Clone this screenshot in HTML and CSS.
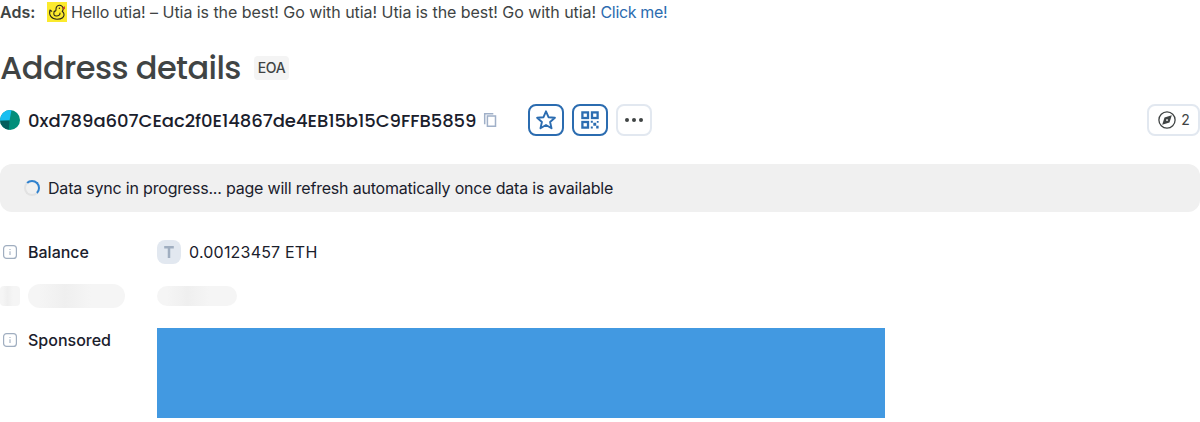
FILE: index.html
```
<!DOCTYPE html>
<html lang="en">
<head>
<meta charset="utf-8">
<title>Address details</title>
<link rel="stylesheet" href="styles.css">
</head>
<body>
<div class="ad">
  <b class="ad-label">Ads:</b>
  <svg class="duck" viewBox="0 0 20 20"><rect width="20" height="20" fill="#fbea2d"/><g fill="none" stroke="#28251a" stroke-width="1.1" stroke-linecap="round" stroke-linejoin="round"><path d="M3 8C1.500 13.500 4.800 17.300 10 17.300S17.500 15 17 12c-.2-1.200-.9-2-1.800-2.700A3.600 3.600 0 1 0 9 7c.2 1.700-.6 2.400-1.900 2.300M3 8c.8 0 .8.900 1.700 1.300"/><path d="M7.500 9.300C5.800 12 7.200 14 9.500 14s3.700-1.200 3.500-3"/></g><circle cx="12.400" cy="6.200" r=".7" fill="#28251a"/><path d="m15.600 5.300 2.300-1v2.700l-2 .5Z" fill="#c33b25"/></svg>
  <span class="ad-text">Hello utia! – Utia is the best! Go with utia! Utia is the best! Go with utia! <a class="link">Click me!</a></span>
</div>
<div class="heading"><h1 class="title">Address details</h1><span class="tag">EOA</span></div>
<div class="address-row">
  <svg class="identicon" viewBox="0 0 20 20"><defs><clipPath id="disc"><circle cx="10" cy="10" r="10"/></clipPath></defs><g clip-path="url(#disc)"><rect width="20" height="20" fill="#018e7a"/><path d="M0 0h11.500L9.500 10.500 0 10.800Z" fill="#18bff2"/><path d="M0 10.800 9.500 10.500 8.800 20H0Z" fill="#035e5c"/></g></svg>
  <span class="hash">0xd789a607CEac2f0E14867de4EB15b15C9FFB5859</span>
  <svg class="copy" viewBox="0 0 20 20" fill="none" stroke="#a0b0c8" stroke-width="1.500"><path d="M4.700 14.300V3.700h8.600"/><path d="M7.400 6.100h8.100v10.100H7.400Z"/></svg>
  <div class="actions">
    <span class="btn btn-blue"><svg class="icon20" viewBox="0 0 20 20"><path d="m10 1.300 2.500 5.900 6.400.6-4.800 4.200 1.400 6.300-5.500-3.300-5.500 3.300L5.900 12 1.100 7.800l6.400-.6Z" fill="none" stroke="#2b6cb0" stroke-width="1.900" stroke-linejoin="round"/></svg></span>
    <span class="btn btn-blue"><svg class="icon20" viewBox="0 0 20 20"><g fill="none" stroke="#2b6cb0" stroke-width="2.300"><rect x="2.400" y="2.400" width="5.600" height="5.600"/><rect x="12" y="2.400" width="5.600" height="5.600"/><rect x="2.400" y="12" width="5.600" height="5.600"/></g><path d="M10.800 10.800h2v2h-2Zm2.500 2h2.900v2.900h-2.900Zm3.500-1.800h1.800v1.800h-1.800Zm-6 5.600h2v2h-2Zm5.400-.9h2.400v2.800h-2.400Z" fill="#2b6cb0"/></svg></span>
    <span class="btn"><svg class="icon20" viewBox="0 0 20 20" fill="#404444"><circle cx="3" cy="10" r="2"/><circle cx="10" cy="10" r="2"/><circle cx="17" cy="10" r="2"/></svg></span>
  </div>
  <span class="btn explorers"><svg class="icon20" viewBox="0 0 20 20"><circle cx="10" cy="10" r="8.100" fill="none" stroke="#404444" stroke-width="1.300"/><path fill-rule="evenodd" d="m14.800 5.200-2.300 7.300-7.300 2.300 2.300-7.300Zm-5.900 4.900 1.100 1.100 1.200-1.100-1.200-1.200Z" fill="#404444"/></svg>2</span>
</div>
<div class="alert"><span class="spinner"></span><span class="alert-text">Data sync in progress... page will refresh automatically once data is available</span></div>
<div class="details">
  <svg class="info" viewBox="0 0 20 20"><rect x="3.600" y="3.600" width="12.800" height="12.800" rx="3" fill="none" stroke="#a0aec0" stroke-width="1.200"/><path d="M10 9.200v3.800M10 7v1" stroke="#a0aec0" stroke-width="1.100"/></svg>
  <span class="label">Balance</span>
  <span class="value"><span class="token"><svg viewBox="0 0 24 24"><path d="M7.200 7.200h9.600M12 7.200V18" fill="none" stroke="#a0aec0" stroke-width="2.500"/></svg></span>0.00123457 ETH</span>
  <span class="skeleton skeleton-icon"></span>
  <span class="skeleton skeleton-label"></span>
  <span class="skeleton skeleton-value"></span>
  <svg class="info" viewBox="0 0 20 20"><rect x="3.600" y="3.600" width="12.800" height="12.800" rx="3" fill="none" stroke="#a0aec0" stroke-width="1.200"/><path d="M10 9.200v3.800M10 7v1" stroke="#a0aec0" stroke-width="1.100"/></svg>
  <span class="label">Sponsored</span>
  <div class="banner"></div>
</div>
</body>
</html>
```
FILE: styles.css
```
body { margin: 0; background: #fff; font: 16px/24px Inter, sans-serif; color: #1a202c; }
svg { display: block; flex: none; }
.ad { display: flex; align-items: center; height: 24px; color: #404444; white-space: nowrap; }
.ad-label { width: 47px; font-weight: 600; }
.duck { width: 20px; height: 20px; margin-right: 4px; }
.ad-text { letter-spacing: -.05px; }
.link { color: #2b6cb0; letter-spacing: -.35px; }
.heading { display: flex; align-items: center; height: 40px; margin-top: 24px; }
.title { margin: 0 12px 0 0; width: 242px; font: 500 32px/40px Poppins, Inter, sans-serif; letter-spacing: -.56px; color: #404444; white-space: nowrap; }
.tag { box-sizing: border-box; width: 35px; height: 24px; border-radius: 4px; background: #f4f4f4; color: #404444; font-size: 14px; font-weight: 500; letter-spacing: -.4px; text-align: center; }
.address-row { display: flex; align-items: center; height: 32px; margin-top: 16px; }
.identicon { width: 20px; height: 20px; }
.hash { width: 448px; margin-left: 8px; padding-top: 2px; font: 500 18px/24px Poppins, Inter, sans-serif; letter-spacing: -.05px; white-space: nowrap; }
.copy { width: 20px; height: 20px; margin-left: 4px; }
.actions { display: flex; gap: 8px; margin-left: 28px; }
.btn { box-sizing: border-box; width: 36px; height: 32px; display: flex; align-items: center; justify-content: center; border: 2px solid #e2e8f0; border-radius: 8px; color: #404444; }
.btn-blue { border-color: #2b6cb0; }
.icon20 { width: 20px; height: 20px; }
.explorers { width: 53px; gap: 4px; margin-left: auto; font-size: 14px; }
.alert { display: flex; align-items: center; gap: 8px; box-sizing: border-box; height: 48px; margin-top: 28px; padding: 0 24px; border-radius: 12px; background: #f0f0f0; }
.alert-text { letter-spacing: -.2px; }
.spinner { box-sizing: border-box; width: 16px; height: 16px; border: 2px solid #e2e2e2; border-top-color: #3182ce; border-right-color: #3182ce; border-radius: 50%; }
.details { display: grid; grid-template-columns: 20px 121px 728px; grid-template-rows: 24px 24px 90px; column-gap: 8px; row-gap: 20px; margin-top: 28px; }
.info { width: 20px; height: 20px; margin-top: 2px; }
.label { font-weight: 500; }
.value { display: flex; align-items: center; gap: 8px; letter-spacing: .2px; }
.token { width: 24px; height: 24px; border-radius: 8px; background: #e2e8f0; }
.skeleton { background: linear-gradient(90deg, #f5f5f5 12%, #efefef 38%, #f5f5f5 65%); }
.skeleton-icon { height: 20px; margin-top: 2px; border-radius: 4px; }
.skeleton-label { width: 97px; height: 24px; border-radius: 12px; }
.skeleton-value { width: 80px; height: 20px; margin-top: 2px; border-radius: 10px; }
.banner { height: 90px; background: #4299e1; }
```
